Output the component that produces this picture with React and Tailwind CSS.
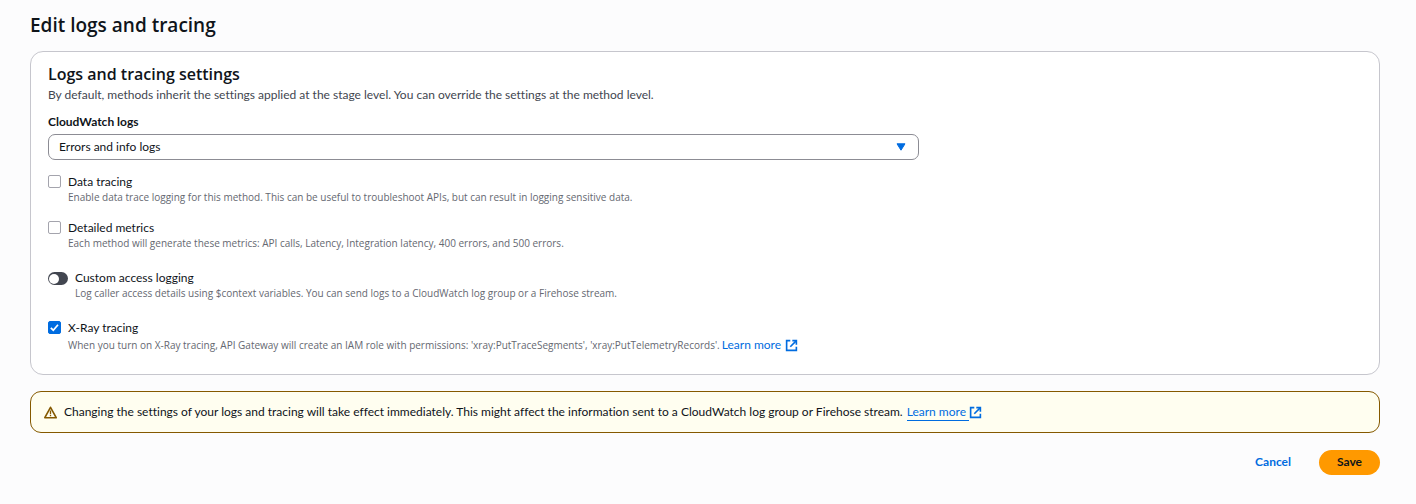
import React, { useState } from "react";

function ExternalIcon() {
  return (
    <svg viewBox="0 0 16 16" className="size-[13px] shrink-0" fill="none" stroke="currentColor" strokeWidth="2" aria-hidden="true">
      <path d="M6.5 2H2v12h12V9.5" />
      <path d="M9 2h5v5" />
      <path d="M6.5 9.5 14 2" />
    </svg>
  );
}

function WarningIcon() {
  return (
    <svg viewBox="0 0 16 16" className="size-[13px] shrink-0 text-[#855900]" fill="none" stroke="currentColor" strokeWidth="2" strokeLinejoin="round" aria-hidden="true">
      <path d="M8 1.6 15 14.4H1L8 1.6Z" />
      <path d="M8 5.5v4.2M8 10.8v1.9" strokeWidth="1.6" />
    </svg>
  );
}

function Hint({ children }) {
  return <p className="font-['Open_Sans',sans-serif] text-[10px] leading-[14px] text-[#656871]">{children}</p>;
}

function Checkbox({ id, label, defaultChecked, children }) {
  return (
    <div className="flex gap-[7px]">
      <span className="mt-px grid size-[13px] shrink-0">
        <input
          id={id}
          type="checkbox"
          defaultChecked={defaultChecked}
          className="peer col-start-1 row-start-1 size-[13px] appearance-none rounded-[2px] border border-[#a4a4ad] bg-white checked:border-[#006ce0] checked:bg-[#006ce0]"
        />
        <svg viewBox="0 0 13 13" className="pointer-events-none invisible col-start-1 row-start-1 size-[13px] peer-checked:visible" fill="none" stroke="white" strokeWidth="1.7" aria-hidden="true">
          <path d="M2.8 6.8 5.3 9.2 10 3.7" />
        </svg>
      </span>
      <div className="flex flex-col">
        <label htmlFor={id} className="leading-4">{label}</label>
        {children}
      </div>
    </div>
  );
}

export default function App() {
  const [custom, setCustom] = useState(false);
  return (
    <main className="min-h-screen bg-[#fcfcfd] pt-3 pr-9 pb-7 pl-[30px] font-[Lato,sans-serif] text-[12px] text-[#0f141a] [font-variant-ligatures:none]">
      <h1 className="font-['Open_Sans',sans-serif] text-[19px] leading-[26px] font-semibold">Edit logs and tracing</h1>

      <form onSubmit={(e) => e.preventDefault()}>
        <section className="mt-[13px] rounded-[13px] border border-[#c6c6cd] bg-white px-[17px] pt-3 pb-5">
          <h2 className="font-['Open_Sans',sans-serif] text-[16px] leading-5 font-semibold">Logs and tracing settings</h2>
          <p className="mt-[3px] leading-4 text-[#424650]">
            By default, methods inherit the settings applied at the stage level. You can override the settings at the method level.
          </p>

          <label htmlFor="cloudwatch" className="mt-[11px] block leading-4 font-bold">CloudWatch logs</label>
          <div className="mt-1 grid grid-cols-3 gap-4">
            <div className="col-span-2 grid items-center">
              <select
                id="cloudwatch"
                className="col-start-1 row-start-1 h-[26px] w-full appearance-none rounded-[7px] border border-[#8c8c94] bg-white px-[10px]"
              >
                <option>Errors and info logs</option>
                <option>Errors only</option>
                <option>Off</option>
              </select>
              <svg viewBox="0 0 10 8" className="pointer-events-none col-start-1 row-start-1 mr-[13px] h-2 w-[10px] justify-self-end" aria-hidden="true">
                <path d="M1 .8h8L5 7.2Z" fill="#006ce0" stroke="#006ce0" strokeLinejoin="round" />
              </svg>
            </div>
          </div>

          <div className="mt-[14px]">
            <Checkbox id="data-tracing" label="Data tracing">
              <Hint>
                Enable data trace logging for this method. This can be useful to troubleshoot APIs, but can result in logging sensitive data.
              </Hint>
            </Checkbox>
          </div>

          <div className="mt-4">
            <Checkbox id="detailed-metrics" label="Detailed metrics">
              <Hint>
                Each method will generate these metrics: API calls, Latency, Integration latency, 400 errors, and 500 errors.
              </Hint>
            </Checkbox>
          </div>

          <div className="mt-5 flex gap-[7px]">
            <button
              id="custom-logging"
              type="button"
              role="switch"
              aria-checked={custom}
              onClick={() => setCustom(!custom)}
              className="mt-[2px] flex h-[13px] w-5 shrink-0 items-center rounded-full bg-[#424650] px-px aria-checked:justify-end aria-checked:bg-[#006ce0]"
            >
              <span className="size-[10px] rounded-full bg-white" />
            </button>
            <div>
              <label htmlFor="custom-logging" className="block leading-4">Custom access logging</label>
              <Hint>
                Log caller access details using $context variables. You can send logs to a CloudWatch log group or a Firehose stream.
              </Hint>
            </div>
          </div>

          <div className="mt-5">
            <Checkbox id="xray" label="X-Ray tracing" defaultChecked>
              <div className="flex h-[18px] items-center gap-[2px]">
                <Hint>
                  When you turn on X-Ray tracing, API Gateway will create an IAM role with permissions: 'xray:PutTraceSegments', 'xray:PutTelemetryRecords'.
                </Hint>
                <a href="#xray" className="flex items-center gap-1 text-[#006ce0]">
                  Learn more <ExternalIcon />
                </a>
              </div>
            </Checkbox>
          </div>
        </section>

        <div className="mt-4 flex items-center gap-[7px] rounded-[11px] border border-[#855900] bg-[#fffef0] px-[13px] py-3 leading-4">
          <WarningIcon />
          <p className="flex items-center gap-1">
            Changing the settings of your logs and tracing will take effect immediately. This might affect the information sent to a CloudWatch log group or Firehose stream.
            <a href="#logs" className="flex items-center text-[#006ce0]">
              <span className="-mb-px border-b border-[#006ce0] pr-[3px]">Learn more</span>
              <ExternalIcon />
            </a>
          </p>
        </div>

        <div className="mt-[17px] flex justify-end gap-[10px] font-bold">
          <button type="button" className="h-[25px] px-[18px] pb-px text-[#006ce0]">Cancel</button>
          <button type="submit" className="h-[25px] rounded-full bg-[#ff9900] px-[18px] pb-px">Save</button>
        </div>
      </form>
    </main>
  );
}
